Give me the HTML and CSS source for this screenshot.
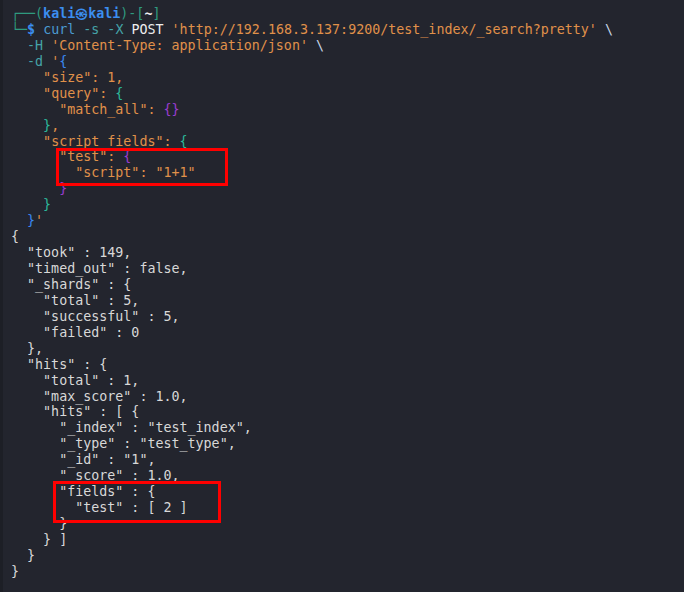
FILE: index.html
```html
<!DOCTYPE html>
<html>
<head>
<meta charset="utf-8">
<link rel="stylesheet" href="styles.css">
</head>
<body>
<div class="term">
<pre class="out"><span class="g">┌──(</span><span class="u">kali㉿kali</span><span class="g">)-[</span><span class="w b">~</span><span class="g">]</span>
<span class="g">└─</span><span class="u">$</span> <span class="cmd">curl</span> <span class="opt">-s</span> <span class="opt">-X</span> <span class="w">POST</span> <span class="s">'http://192.168.3.137:9200/test_index/_search?pretty'</span> <span class="bs">\</span>
  <span class="opt">-H</span> <span class="s">'Content-Type: application/json'</span> <span class="bs">\</span>
  <span class="opt">-d</span> <span class="s">'</span><span class="l1">{</span>
    <span class="s">"size": 1,</span>
    <span class="s">"query": </span><span class="l2">{</span>
      <span class="s">"match_all": </span><span class="l3">{}</span>
    <span class="l2">}</span><span class="s">,</span>
    <span class="s">"script_fields": </span><span class="l2">{</span>
      <span class="s">"test": </span><span class="l3">{</span>
        <span class="s">"script": "1+1"</span>
      <span class="l3">}</span>
    <span class="l2">}</span>
  <span class="l1">}</span><span class="s">'</span>
<span class="j">{
  "took" : 149,
  "timed_out" : false,
  "_shards" : {
    "total" : 5,
    "successful" : 5,
    "failed" : 0
  },
  "hits" : {
    "total" : 1,
    "max_score" : 1.0,
    "hits" : [ {
      "_index" : "test_index",
      "_type" : "test_type",
      "_id" : "1",
      "_score" : 1.0,
      "fields" : {
        "test" : [ 2 ]
      }
    } ]
  }
}</span></pre>
<div class="mark mark-a"></div>
<div class="mark mark-b"></div>
</div>
</body>
</html>
```
FILE: styles.css
```css
html, body {
  margin: 0;
  padding: 0;
  background: #23252e;
}
.term {
  position: relative;
  width: 684px;
  height: 592px;
  overflow: hidden;
  background: #23252e;
  border-left: 3px solid #1d1f26;
  box-sizing: border-box;
}
.out {
  margin: 0;
  padding: 6px 0 0 8px;
  font-family: "DejaVu Sans Mono", "Liberation Mono", monospace;
  font-size: 13.33px;
  line-height: 15.94px;
  color: #d6d6d6;
}
.g { color: #2f9a7f; }
.u { color: #3b8ef0; font-weight: bold; }
.w { color: #eeeeee; }
.b { font-weight: bold; }
.cmd { color: #4b9bd2; }
.opt { color: #45a3a8; }
.s { color: #e0914a; }
.bs { color: #c9d6e6; }
.l1 { color: #3a88f0; }
.l2 { color: #2cb89a; }
.l3 { color: #9a3cd0; }
.j { color: #d8d8d8; }
.mark {
  position: absolute;
  border: 3px solid #ff0000;
  box-sizing: border-box;
}
.mark-a {
  left: 53px;
  top: 148px;
  width: 172px;
  height: 38px;
}
.mark-b {
  left: 50px;
  top: 481px;
  width: 168px;
  height: 42px;
}
```
